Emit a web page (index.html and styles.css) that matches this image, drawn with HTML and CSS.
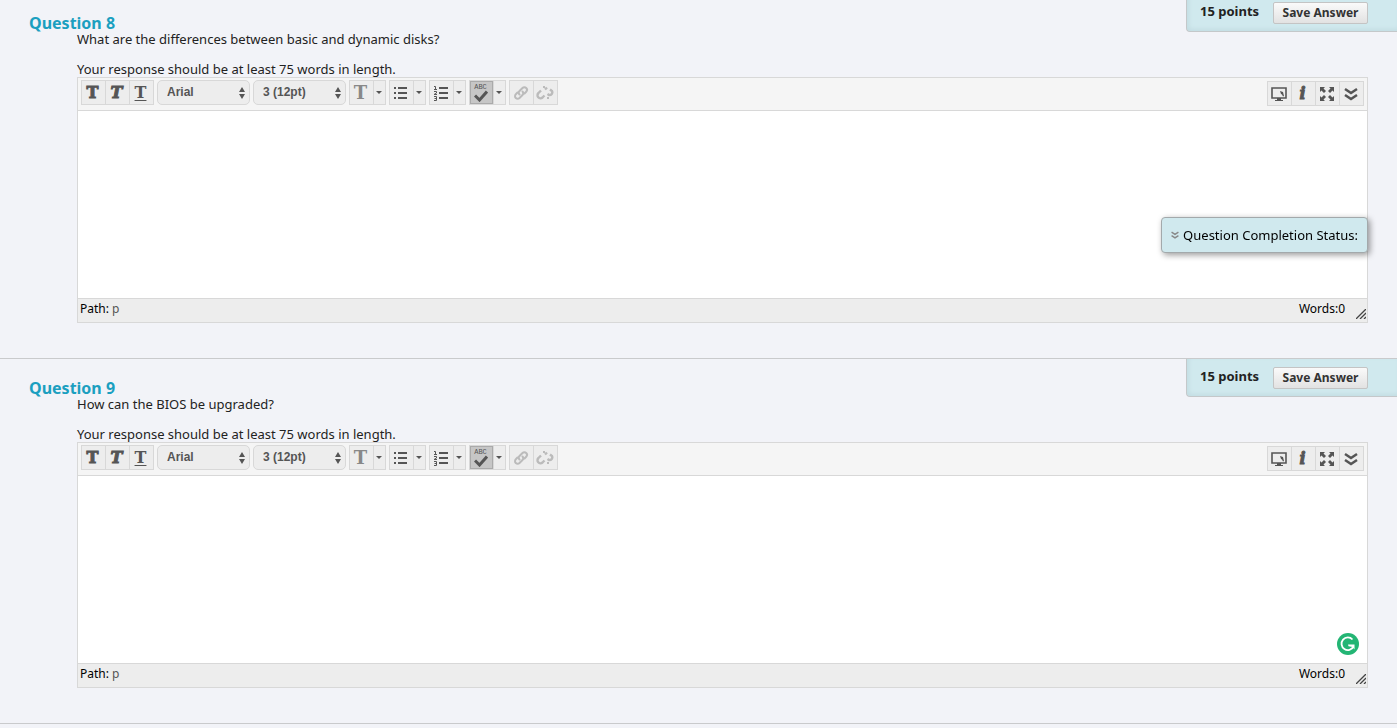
FILE: index.html
```html
<!DOCTYPE html>
<html lang="en">
<head>
	<meta charset="utf-8">
	<title>Take Test</title>
	<link rel="stylesheet" href="styles.css">
</head>

<body>
	<svg class="sprite" aria-hidden="true">
		<symbol id="updown" viewBox="0 0 6 12">
			<path d="M3 0L6 5H0zM3 12L0 7h6z"/>
		</symbol>
		<symbol id="bullets" viewBox="0 0 16 16">
			<path d="M1 2h2v2H1zM1 7h2v2H1zM1 12h2v2H1zM5 2h9v2H5zM5 7h9v2H5zM5 12h9v2H5z"/>
		</symbol>
		<symbol id="numbers" viewBox="0 0 16 16">
			<path d="M6 2h9v2H6zM6 7h9v2H6zM6 12h9v2H6z"/>
			<path d="M1 1.500h1.500v3M1 4.500h3M1 6.500h2.500v1.500L1 9.500h3M1 11.500h2.500v4H1M1.500 13.500h2" fill="none" stroke="currentColor"/>
		</symbol>
		<symbol id="check" viewBox="0 0 14 12">
			<path d="M1 5.500l4.500 4.500L13 1.500" fill="none" stroke="currentColor" stroke-width="3"/>
		</symbol>
		<symbol id="link" viewBox="0 0 16 16">
			<g fill="none" stroke="currentColor" stroke-width="2" stroke-linecap="round">
				<path d="M6.500 9.500a2.500 2.500 0 0 1 0-3.500l3-3a2.500 2.500 0 0 1 3.700 3.700L11.500 8.500"/>
				<path d="M9.500 6.500a2.500 2.500 0 0 1 0 3.500l-3 3a2.500 2.500 0 0 1-3.700-3.700L4.500 7.500"/>
			</g>
		</symbol>
		<symbol id="unlink" viewBox="0 0 18 16">
			<g fill="none" stroke="currentColor" stroke-width="2.400">
				<path d="M5 5.500L2.500 8a2.600 2.600 0 0 0 4 4.500L8.500 10.500"/>
				<path d="M9 4.500l2-2M11.500 9l1.500 1a2.800 2.800 0 0 0 3-4L14 4.500"/>
			</g>
			<path d="M7 1h2v2H7zM11 12h2v2h-2z"/>
		</symbol>
		<symbol id="screen" viewBox="0 0 16 16">
			<path d="M1 2h14v10H1z" fill="none" stroke="currentColor" stroke-width="1.600"/>
			<path d="M6 12h4v2h2v1H4v-1h2zM9 5l3 1 1 4-1 .500-1-2-1-.500z"/>
		</symbol>
		<symbol id="expand" viewBox="0 0 16 16">
			<path d="M1 1h5L4.500 2.500 7 5 5 7 2.500 4.500 1 6zM15 1v5l-1.500-1.500L11 7 9 5l2.500-2.500L10 1zM1 15v-5l1.500 1.500L5 9l2 2-2.500 2.500L6 15zM15 15h-5l1.500-1.500L9 11l2-2 2.500 2.500L15 10z"/>
		</symbol>
		<symbol id="more" viewBox="0 0 14 14">
			<path d="M1 2l6 4 6-4M1 8l6 4 6-4" fill="none" stroke="currentColor" stroke-width="2.500"/>
		</symbol>
		<symbol id="grip" viewBox="0 0 10 10">
			<path d="M0 10L10 0M4 10l6-6M8 10l2-2" fill="none" stroke="currentColor" stroke-width="1.300"/>
		</symbol>
	</svg>

	<div class="status">
		<button type="button" class="status-button">
			<svg class="status-icon"><use href="#more"/></svg>
			Question Completion Status:
		</button>
	</div>

	<main class="questions">
		<section class="question">
			<div class="points">
				<span>15 points</span>
				<button type="button" class="button-save">Save Answer</button>
			</div>
			<h3 class="title">Question 8</h3>
			<div class="content">
				<label class="prompt" for="answer8">What are the differences between basic and dynamic disks?<br><br>Your response should be at least 75 words in length.</label>
				<div class="editor">
					<div class="toolbar">
						<div class="group">
							<button type="button" class="tool letter" aria-label="Bold">T</button>
							<button type="button" class="tool letter italic" aria-label="Italic">T</button>
							<button type="button" class="tool letter underline" aria-label="Underline">T</button>
						</div>
						<div class="select-wrap">
							<select class="select" aria-label="Font"><option>Arial</option></select>
							<svg class="updown"><use href="#updown"/></svg>
						</div>
						<div class="select-wrap">
							<select class="select" aria-label="Size"><option>3 (12pt)</option></select>
							<svg class="updown"><use href="#updown"/></svg>
						</div>
						<div class="group">
							<button type="button" class="tool letter color" aria-label="Text color">T</button>
							<button type="button" class="arrow" aria-label="More colors"></button>
						</div>
						<div class="group">
							<button type="button" class="tool" aria-label="Bulleted list"><svg class="icon"><use href="#bullets"/></svg></button>
							<button type="button" class="arrow" aria-label="Bullet styles"></button>
						</div>
						<div class="group">
							<button type="button" class="tool" aria-label="Numbered list"><svg class="icon"><use href="#numbers"/></svg></button>
							<button type="button" class="arrow" aria-label="Number styles"></button>
						</div>
						<div class="group">
							<button type="button" class="tool spell" aria-label="Spell check"><span>ABC</span><svg class="check"><use href="#check"/></svg></button>
							<button type="button" class="arrow" aria-label="Spelling language"></button>
						</div>
						<div class="group">
							<button type="button" class="tool off" aria-label="Link" disabled><svg class="icon"><use href="#link"/></svg></button>
							<button type="button" class="tool off" aria-label="Remove link" disabled><svg class="icon wide"><use href="#unlink"/></svg></button>
						</div>
						<div class="group right">
							<button type="button" class="tool" aria-label="Preview"><svg class="icon"><use href="#screen"/></svg></button>
							<button type="button" class="tool letter italic" aria-label="Help">i</button>
							<button type="button" class="tool" aria-label="Full screen"><svg class="icon"><use href="#expand"/></svg></button>
							<button type="button" class="tool" aria-label="Show more"><svg class="icon more"><use href="#more"/></svg></button>
						</div>
					</div>
					<textarea class="answer" id="answer8"></textarea>
					<div class="bar">
						<span>Path: <a href="#answer8">p</a></span>
						<span class="words">Words:0</span>
						<svg class="grip"><use href="#grip"/></svg>
					</div>
				</div>
			</div>
		</section>

		<section class="question">
			<div class="points">
				<span>15 points</span>
				<button type="button" class="button-save">Save Answer</button>
			</div>
			<h3 class="title">Question 9</h3>
			<div class="content">
				<label class="prompt" for="answer9">How can the BIOS be upgraded?<br><br>Your response should be at least 75 words in length.</label>
				<div class="editor">
					<div class="toolbar">
						<div class="group">
							<button type="button" class="tool letter" aria-label="Bold">T</button>
							<button type="button" class="tool letter italic" aria-label="Italic">T</button>
							<button type="button" class="tool letter underline" aria-label="Underline">T</button>
						</div>
						<div class="select-wrap">
							<select class="select" aria-label="Font"><option>Arial</option></select>
							<svg class="updown"><use href="#updown"/></svg>
						</div>
						<div class="select-wrap">
							<select class="select" aria-label="Size"><option>3 (12pt)</option></select>
							<svg class="updown"><use href="#updown"/></svg>
						</div>
						<div class="group">
							<button type="button" class="tool letter color" aria-label="Text color">T</button>
							<button type="button" class="arrow" aria-label="More colors"></button>
						</div>
						<div class="group">
							<button type="button" class="tool" aria-label="Bulleted list"><svg class="icon"><use href="#bullets"/></svg></button>
							<button type="button" class="arrow" aria-label="Bullet styles"></button>
						</div>
						<div class="group">
							<button type="button" class="tool" aria-label="Numbered list"><svg class="icon"><use href="#numbers"/></svg></button>
							<button type="button" class="arrow" aria-label="Number styles"></button>
						</div>
						<div class="group">
							<button type="button" class="tool spell" aria-label="Spell check"><span>ABC</span><svg class="check"><use href="#check"/></svg></button>
							<button type="button" class="arrow" aria-label="Spelling language"></button>
						</div>
						<div class="group">
							<button type="button" class="tool off" aria-label="Link" disabled><svg class="icon"><use href="#link"/></svg></button>
							<button type="button" class="tool off" aria-label="Remove link" disabled><svg class="icon wide"><use href="#unlink"/></svg></button>
						</div>
						<div class="group right">
							<button type="button" class="tool" aria-label="Preview"><svg class="icon"><use href="#screen"/></svg></button>
							<button type="button" class="tool letter italic" aria-label="Help">i</button>
							<button type="button" class="tool" aria-label="Full screen"><svg class="icon"><use href="#expand"/></svg></button>
							<button type="button" class="tool" aria-label="Show more"><svg class="icon more"><use href="#more"/></svg></button>
						</div>
					</div>
					<textarea class="answer" id="answer9"></textarea>
					<div class="bar">
						<span>Path: <a href="#answer9">p</a></span>
						<span class="words">Words:0</span>
						<svg class="grip"><use href="#grip"/></svg>
					</div>
					<button type="button" class="checker" aria-label="Check writing">
						<svg viewBox="0 0 22 22">
							<path d="M15.500 6.500a6.300 6.300 0 1 0 1 7" fill="none" stroke="#fff" stroke-width="1.800"/>
							<path d="M11 11.500h6.500v5l-2-2.500-4-.700z" fill="#fff"/>
						</svg>
					</button>
				</div>
			</div>
		</section>
	</main>
</body>

</html>
```
FILE: styles.css
```css
*{
	box-sizing: border-box;
}

body{
	margin: 0;
	background-color: #f2f3f8;
	color: #222;
	font-family: "Noto Sans", sans-serif;
	font-size: 13px;
	line-height: 15px;
}

button, select, textarea{
	margin: 0;
	padding: 0;
	font: inherit;
	color: inherit;
}

svg{
	display: block;
	fill: currentColor;
}

.sprite{
	position: absolute;
	width: 0;
	height: 0;
}

/* the first question is scrolled a little past the top */
.questions{
	margin-top: -7px;
	border-bottom: 1px solid #c9cacc;
}

.question{
	position: relative;
	padding: 20px 29px 35px;
	border-top: 1px solid #c9cacc;
}

.title{
	margin: 0;
	color: #1b9fc0;
	font-size: 16px;
	line-height: 18px;
}

.content{
	padding-left: 48px;
}

.prompt{
	display: block;
}

.points{
	position: absolute;
	top: 0;
	right: 0;
	display: flex;
	align-items: flex-start;
	justify-content: space-between;
	width: 211px;
	height: 38px;
	padding: 8px 29px 0 13px;
	background-color: #d0e9ee;
	border: 1px solid #c4c8ca;
	border-width: 0 0 1px 1px;
	border-bottom-left-radius: 4px;
	box-shadow: inset 2px -2px 4px #c3dde3;
	font-weight: bold;
	line-height: 18px;
}

.button-save{
	width: 95px;
	height: 22px;
	background: linear-gradient(#fafafa, #e2e2e2);
	border: 1px solid #c4c4c4;
	border-radius: 2px;
	color: #333;
	font-size: 12px;
	line-height: 20px;
}

.editor{
	position: relative;
	border: 1px solid #d8d8d8;
}

.toolbar{
	display: flex;
	gap: 3px;
	height: 33px;
	padding: 2px 3px;
	background-color: #f5f5f5;
	border-bottom: 1px solid #d8d8d8;
}

.group{
	display: flex;
	height: 25px;
	border: 1px solid #d8d8d8;
	background-color: #ededed;
}

.right{
	margin-top: 1px;
	margin-left: auto;
}

.tool, .arrow{
	display: flex;
	align-items: center;
	justify-content: center;
	width: 24px;
	height: 23px;
	padding-right: 2px;
	background: none;
	border: 0;
	border-left: 1px solid #d8d8d8;
	color: #555;
}

.group > :first-child{
	width: 23px;
	border-left: 0;
}

.group > .arrow{
	width: 12px;
}

.arrow::before{
	content: "";
	border: 3px solid transparent;
	border-top-color: #555;
	border-bottom: 0;
}

.letter{
	font-family: "DejaVu Serif", serif;
	font-size: 16px;
	font-weight: bold;
	-webkit-text-stroke: 1px #555;
}

.italic{
	font-style: italic;
}

.underline{
	text-decoration: underline 1px;
	text-underline-offset: 2px;
	-webkit-text-stroke: 0;
}

.color{
	color: #888;
	font-size: 18px;
	-webkit-text-stroke: 0;
}

.icon{
	width: 16px;
	height: 16px;
}

.wide{
	width: 18px;
}

.more{
	width: 14px;
	height: 14px;
}

.spell{
	flex-direction: column;
	background-color: #c6c6c6;
	box-shadow: inset 0 0 0 1px #aaa;
}

.spell span{
	font-family: "Liberation Mono", monospace;
	font-size: 7px;
	line-height: 6px;
}

.check{
	width: 14px;
	height: 12px;
}

.off{
	color: #bbb;
}

.select-wrap{
	position: relative;
	width: 93px;
	height: 25px;
}

.select{
	width: 100%;
	height: 100%;
	padding: 0 9px;
	appearance: none;
	background-color: #ededed;
	border: 1px solid #d8d8d8;
	border-radius: 5px;
	color: #555;
	font-family: "Liberation Sans", sans-serif;
	font-size: 12px;
	font-weight: bold;
}

.updown{
	position: absolute;
	top: 7px;
	right: 5px;
	width: 6px;
	height: 12px;
	color: #555;
	pointer-events: none;
}

.answer{
	display: block;
	width: 100%;
	height: 187px;
	padding: 8px;
	background-color: #fff;
	border: 0;
	outline: 0;
	resize: none;
}

.bar{
	display: flex;
	height: 24px;
	padding: 0 1px 0 2px;
	background-color: #ededed;
	border-top: 1px solid #d8d8d8;
	color: #000;
	font-size: 12px;
	line-height: 20px;
}

.bar a{
	color: #555;
	text-decoration: none;
}

.words{
	margin-left: auto;
}

.grip{
	width: 10px;
	height: 10px;
	margin: 10px 0 0 11px;
	color: #444;
}

.checker{
	position: absolute;
	right: 8px;
	bottom: 32px;
	width: 22px;
	height: 22px;
	background-color: #23b574;
	border: 0;
	border-radius: 50%;
}

.status{
	position: fixed;
	z-index: 2;
	top: 217px;
	right: 29px;
}

.status-button{
	display: flex;
	align-items: center;
	gap: 4px;
	height: 36px;
	padding: 0 9px;
	background-color: #d0e9ee;
	border: 1px solid #a3a9ab;
	border-radius: 4px;
	box-shadow: 2px 2px 6px rgba(0, 0, 0, 0.4);
	color: #000;
}

.status-icon{
	width: 8px;
	height: 8px;
	color: #888;
}
```
